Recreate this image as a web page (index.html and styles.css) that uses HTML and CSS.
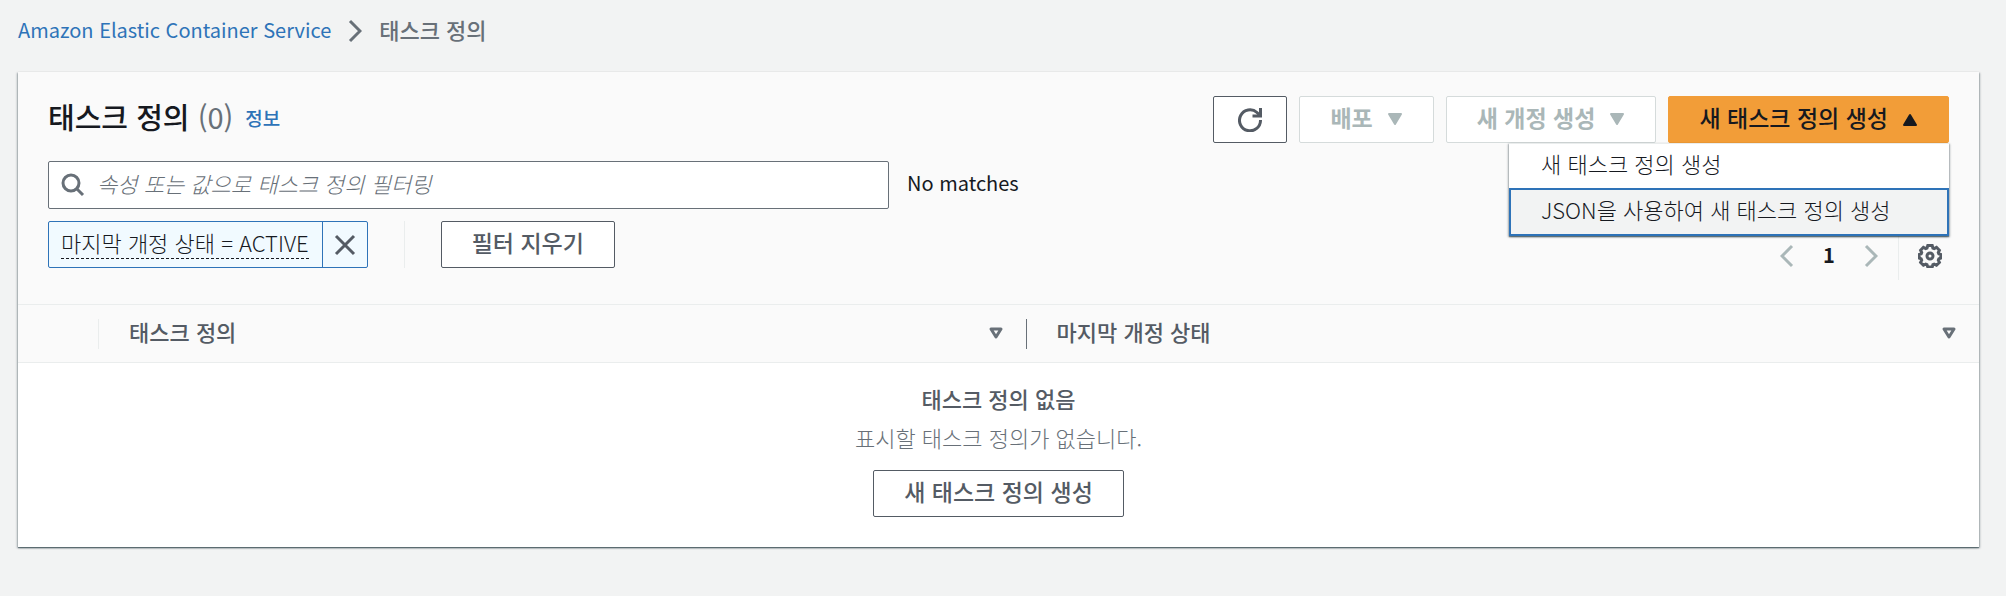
FILE: index.html
```html
<!DOCTYPE html>
<html lang="ko">
<head>
    <meta charset="UTF-8">
    <meta name="viewport" content="width=device-width, initial-scale=1.0">
    <title>태스크 정의 | Amazon Elastic Container Service</title>
    <link rel="stylesheet" href="styles.css">
</head>
<body>
    <nav class="breadcrumb" aria-label="breadcrumb">
        <a href="#">Amazon Elastic Container Service</a>
        <svg class="crumb-arrow" viewBox="0 0 14 24"><path d="M2 2l10 10L2 22"/></svg>
        <span class="current">태스크 정의</span>
    </nav>

    <main class="card">
        <div class="card-header">
            <div class="title-row">
                <h1>태스크 정의 <span class="count">(0)</span></h1>
                <a class="info" href="#">정보</a>
                <div class="actions">
                    <button class="btn btn-icon" aria-label="새로 고침">
                        <svg class="icon" viewBox="0 0 24 24"><path d="M22.500 12A10.500 10.500 0 1 1 19 4.500l2.500 2.500"/><path d="M22.500 0v8H14.500"/></svg>
                    </button>
                    <button class="btn" disabled>배포 <svg class="caret" viewBox="0 0 16 13"><path d="M2 1h12L8 11z"/></svg></button>
                    <button class="btn" disabled>새 개정 생성 <svg class="caret" viewBox="0 0 16 13"><path d="M2 1h12L8 11z"/></svg></button>
                    <div class="dropdown">
                        <button class="btn btn-primary" aria-expanded="true">새 태스크 정의 생성 <svg class="caret" viewBox="0 0 16 13"><path d="M2 12h12L8 2z"/></svg></button>
                        <ul class="menu">
                            <li><a href="#">새 태스크 정의 생성</a></li>
                            <li><a class="active" href="#">JSON을 사용하여 새 태스크 정의 생성</a></li>
                        </ul>
                    </div>
                </div>
            </div>

            <div class="toolbar">
                <div class="filters">
                    <div class="search-row">
                        <label class="search">
                            <svg class="icon" viewBox="0 0 24 24"><circle cx="10" cy="10" r="8"/><path d="M15.500 15.500L22 22"/></svg>
                            <input type="text" aria-label="태스크 정의 필터링" placeholder="속성 또는 값으로 태스크 정의 필터링">
                        </label>
                        <span class="matches">No matches</span>
                    </div>
                    <div class="token-row">
                        <div class="token">
                            <button class="token-label"><span>마지막 개정 상태 = ACTIVE</span></button>
                            <button class="token-remove" aria-label="제거">
                                <svg class="icon" viewBox="0 0 24 24"><path d="M3 3l18 18M21 3L3 21"/></svg>
                            </button>
                        </div>
                        <span class="separator"></span>
                        <button class="btn">필터 지우기</button>
                    </div>
                </div>
                <div class="pager">
                    <button class="page-btn" aria-label="이전" disabled><svg class="page-arrow" viewBox="0 0 14 24"><path d="M12 2L2 12l10 10"/></svg></button>
                    <button class="page-btn page-number">1</button>
                    <button class="page-btn" aria-label="다음" disabled><svg class="page-arrow" viewBox="0 0 14 24"><path d="M2 2l10 10L2 22"/></svg></button>
                    <button class="settings" aria-label="기본 설정">
                        <svg class="icon" viewBox="0 0 24 24"><path d="M9.800 1.500h4.400l.7 2.500 1.300.5 2.300-1.200 2.900 2.900-1.100 2.400.5 1.200 2 .7v3.500l-2 .8-.5 1.300 1.100 2.400-2.900 2.800-2.300-1.100-1.300.5-.7 2.300H9.800L9 20.700l-1.300-.5-2.300 1.100-2.800-2.800 1.100-2.400-.5-1.300-2-.8v-3.500l2-.7.5-1.200-1.100-2.400 2.800-2.900L7.700 4.500 9 4z"/><circle cx="12" cy="12" r="3"/></svg>
                    </button>
                </div>
            </div>
        </div>

        <table>
            <thead>
                <tr>
                    <th class="col-select"></th>
                    <th class="col-name"><div class="th-content">태스크 정의 <svg class="sort" viewBox="0 0 16 13"><path d="M3 2h10L8 10z"/></svg></div></th>
                    <th><div class="th-content">마지막 개정 상태 <svg class="sort" viewBox="0 0 16 13"><path d="M3 2h10L8 10z"/></svg></div></th>
                </tr>
            </thead>
            <tbody>
                <tr>
                    <td class="empty" colspan="3">
                        <strong>태스크 정의 없음</strong>
                        <p>표시할 태스크 정의가 없습니다.</p>
                        <button class="btn">새 태스크 정의 생성</button>
                    </td>
                </tr>
            </tbody>
        </table>
    </main>
</body>
</html>
```
FILE: styles.css
```css
*{
    margin: 0;
    padding: 0;
    box-sizing: border-box;
}
body{
    background: #f2f3f3;
    color: #16191f;
    font-family: "Noto Sans CJK KR", sans-serif;
    font-size: 22px;
    font-weight: 300;
    line-height: 30px;
    padding: 14px 27px 48px 18px;
}
a{
    color: #2e73b8;
    text-decoration: none;
}
button, input{
    font: inherit;
    color: inherit;
}
svg{
    flex: none;
    fill: none;
    stroke: currentColor;
    stroke-width: 3;
}
.icon{
    width: 24px;
    height: 24px;
}

/* breadcrumb */
.breadcrumb{
    display: flex;
    align-items: center;
    gap: 17px;
    font-weight: 400;
    margin-bottom: 24px;
}
.breadcrumb a{
    font-size: 20px;
    padding-bottom: 2px;
}
.crumb-arrow{
    width: 14px;
    height: 24px;
    color: #687078;
}
.current{
    color: #687078;
    font-weight: 500;
    padding-bottom: 4px;
}

/* card */
.card{
    background: #fff;
    box-shadow: 0 1px 1px 0 rgba(0, 28, 36, .4), 1px 1px 2px 0 rgba(0, 28, 36, .3), -1px 1px 2px 0 rgba(0, 28, 36, .3);
}
.card-header{
    background: #fafafa;
    padding: 24px 30px;
}
.title-row{
    display: flex;
    align-items: center;
    margin-bottom: 18px;
}
h1{
    font-size: 29px;
    font-weight: 500;
    line-height: 36px;
    padding-bottom: 8px;
}
.count{
    color: #687078;
    font-weight: 400;
}
.info{
    font-size: 19px;
    font-weight: 500;
    margin-left: 12px;
    padding-bottom: 4px;
}
.actions{
    display: flex;
    gap: 12px;
    margin-left: auto;
}
.btn{
    display: flex;
    align-items: center;
    justify-content: center;
    gap: 14px;
    height: 47px;
    padding: 0 30px 6px;
    background: #fff;
    border: 1px solid #545b64;
    border-radius: 2px;
    color: #545b64;
    font-size: 23px;
    font-weight: 500;
}
.btn:disabled{
    border-color: #d5dbdb;
    color: #aab7b8;
    font-weight: 700;
}
.btn-icon{
    padding: 0 24px;
}
.btn-primary{
    background: #f29d38;
    border-color: #f29d38;
    color: #16191f;
}
.caret{
    width: 16px;
    height: 13px;
    margin-top: 6px;
    fill: currentColor;
    stroke-width: 2;
    stroke-linejoin: round;
}

/* create menu */
.dropdown{
    position: relative;
}
.menu{
    position: absolute;
    top: 100%;
    right: 0;
    z-index: 1;
    width: 440px;
    list-style: none;
    background: #fff;
    border-top: 1px solid #eaeded;
    box-shadow: 0 1px 1px 0 rgba(0, 28, 36, .4), 1px 1px 2px 0 rgba(0, 28, 36, .3), -1px 1px 2px 0 rgba(0, 28, 36, .3);
}
.menu a{
    display: block;
    padding: 4px 30px 10px;
    border: 2px solid transparent;
    border-width: 0 2px;
    color: #16191f;
    white-space: nowrap;
}
.menu .active{
    padding: 4px 30px 10px;
    background: #f2f3f3;
    border: 2px solid #2e73b8;
}

/* filters */
.toolbar{
    display: flex;
    align-items: flex-end;
    justify-content: space-between;
}
.filters{
    flex: 1;
    padding-bottom: 12px;
}
.search-row{
    display: flex;
    align-items: center;
    gap: 18px;
    margin-bottom: 12px;
}
.search{
    display: flex;
    align-items: center;
    flex: 0 1 841px;
    gap: 12px;
    height: 48px;
    padding: 0 12px;
    background: #fff;
    border: 1px solid #687078;
    border-radius: 2px;
    color: #687078;
}
.search input{
    flex: 1;
    min-width: 0;
    padding-bottom: 4px;
    border: none;
    outline: none;
    background: none;
}
.search input::placeholder{
    color: #687078;
    font-style: italic;
    opacity: 1;
}
.matches{
    font-size: 20px;
    font-weight: 400;
    padding-bottom: 4px;
}
.token-row{
    display: flex;
    align-items: center;
}
.token{
    display: flex;
    height: 47px;
    background: #f1faff;
    border: 1px solid #2e73b8;
    border-radius: 2px;
}
.token button{
    background: none;
    border: none;
}
.token-label{
    padding: 0 13px 0 12px;
}
.token-label span{
    display: block;
    line-height: 24px;
    padding-bottom: 4px;
    border-bottom: 1px dashed #16191f;
}
.token .token-remove{
    display: flex;
    align-items: center;
    padding: 0 10px;
    border-left: 1px solid #2e73b8;
    color: #545b64;
}
.separator{
    width: 1px;
    height: 47px;
    margin: 0 36px;
    background: #eaeded;
}

/* pager */
.pager{
    display: flex;
    align-items: center;
    height: 48px;
}
.pager button{
    display: flex;
    align-items: center;
    justify-content: center;
    background: none;
    border: none;
}
.pager .page-btn{
    width: 42px;
    height: 48px;
}
.page-btn:disabled{
    color: #aab7b8;
}
.page-arrow{
    width: 14px;
    height: 24px;
}
.pager .page-number{
    font-size: 20px;
    font-weight: 700;
    padding-bottom: 2px;
}
.pager .settings{
    height: 48px;
    margin-left: 6px;
    padding: 0 7px 0 19px;
    border-left: 1px solid #eaeded;
    color: #545b64;
}

/* table */
table{
    width: 100%;
    table-layout: fixed;
    border-collapse: collapse;
}
th{
    height: 58px;
    background: #fafafa;
    border-top: 1px solid #eaeded;
    border-bottom: 1px solid #eaeded;
    color: #545b64;
    font-weight: 500;
    text-align: left;
}
.col-select{
    width: 80px;
}
.col-name{
    width: 47.3%;
}
.th-content{
    display: flex;
    align-items: center;
    justify-content: space-between;
    padding: 0 22px 6px 30px;
    border-left: 1px solid #687078;
    line-height: 24px;
}
.col-name .th-content{
    border-left-color: #eaeded;
}
.sort{
    width: 16px;
    height: 13px;
    margin-top: 6px;
    color: #687078;
    stroke-linejoin: round;
}
.empty{
    padding: 20px 30px 30px;
    color: #687078;
    text-align: center;
}
.empty strong{
    color: #545b64;
    font-weight: 500;
}
.empty p{
    margin: 9px 0 18px;
}
.empty .btn{
    margin: 0 auto;
}
```
